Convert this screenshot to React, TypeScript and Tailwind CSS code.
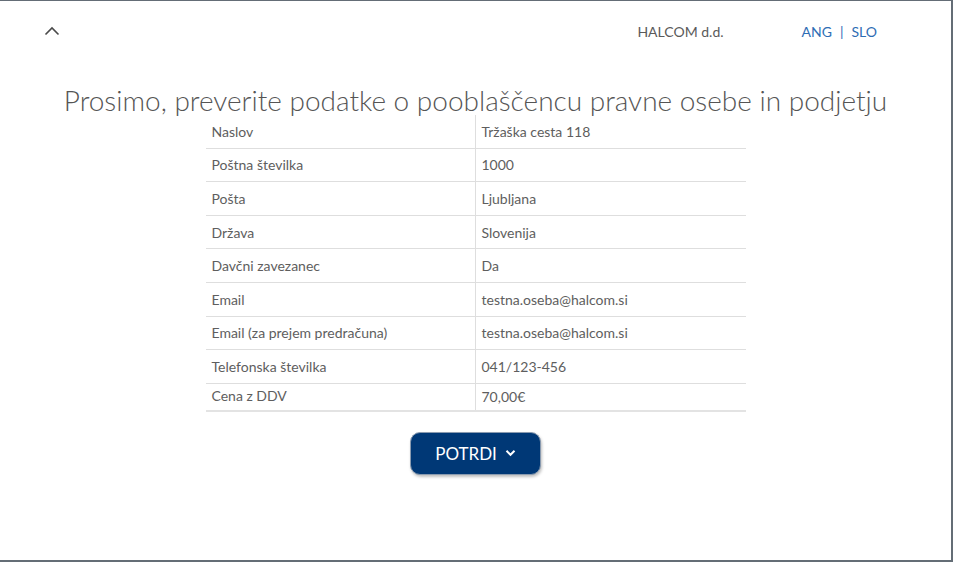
import React from "react";

const rows = [
  { label: "Naslov", value: "Tržaška cesta 118" },
  { label: "Poštna številka", value: "1000" },
  { label: "Pošta", value: "Ljubljana" },
  { label: "Država", value: "Slovenija" },
  { label: "Davčni zavezanec", value: "Da" },
  { label: "Email", value: "testna.oseba@halcom.si" },
  { label: "Email (za prejem predračuna)", value: "testna.oseba@halcom.si" },
  { label: "Telefonska številka", value: "041/123-456" },
];

const ChevronUp = () => (
  <svg width="16" height="10" viewBox="0 0 16 10" fill="none">
    <path d="M1.5 8.5 L8 2 L14.5 8.5" stroke="#4a4a4a" strokeWidth="1.6" />
  </svg>
);

const ChevronDown = () => (
  <svg width="11" height="8" viewBox="0 0 11 8" fill="none">
    <path d="M1.5 1.8 L5.5 5.8 L9.5 1.8" stroke="#ffffff" strokeWidth="2" />
  </svg>
);

export default function App() {
  return (
    <div className="h-[562px] w-[953px] overflow-hidden border-t border-r-2 border-b-2 border-[#646d76] bg-white font-['Lato',sans-serif] text-[#555]">
      <header className="flex h-[60px] items-center pl-[44px] pr-[74px]">
        <button className="flex h-4 w-4 items-center">
          <ChevronUp />
        </button>
        <div className="ml-auto text-[14px] text-[#5a5a5a]">HALCOM d.d.</div>
        <div className="ml-[78px] flex items-center gap-[8px] text-[14px] text-[#2e6db4]">
          <span>ANG</span>
          <span>|</span>
          <span>SLO</span>
        </div>
      </header>

      <main className="flex flex-col items-center">
        <h1 className="mt-[24px] h-[30px] text-[28px] leading-[30px] font-light text-[#555]">
          Prosimo, preverite podatke o pooblaščencu pravne osebe in podjetju
        </h1>

        <div className="w-[540px] text-[14px] text-[#5e5e5e]">
          {rows.map((r) => (
            <div key={r.label} className="flex h-[33.6px] border-b border-[#dedede]">
              <div className="flex w-[270px] items-center border-r border-[#dedede] pl-[6px]">{r.label}</div>
              <div className="flex flex-1 items-center pl-[6px]">{r.value}</div>
            </div>
          ))}
          <div className="flex h-[28px] border-b-2 border-[#e3e3e3]">
            <div className="flex w-[270px] items-center border-r border-[#dedede] pl-[6px] pb-[3px]">Cena z DDV</div>
            <div className="flex flex-1 items-center pl-[6px]">70,00€</div>
          </div>
        </div>

        <button className="mt-[20px] flex h-[43px] w-[131px] items-center justify-center gap-[8px] rounded-[10px] border border-[#8a9bb0] bg-[#003876] text-[17px] text-white shadow-[1px_2px_3px_rgba(0,0,0,0.25)]">
          <span>POTRDI</span>
          <ChevronDown />
        </button>
      </main>
    </div>
  );
}
